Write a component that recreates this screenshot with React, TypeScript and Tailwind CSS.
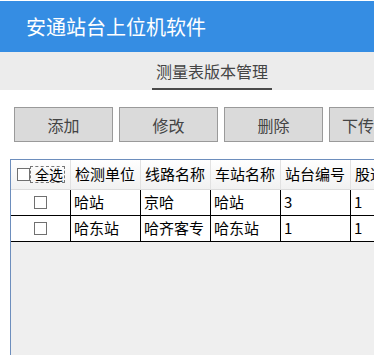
import React from "react";

const font = { fontFamily: '"Noto Sans CJK SC", "Microsoft YaHei", sans-serif' };

const cols = ["检测单位", "线路名称", "车站名称", "站台编号", "股道"];
const rows = [
  ["哈站", "京哈", "哈站", "3", "1"],
  ["哈东站", "哈齐客专", "哈东站", "1", "1"],
];

function Box() {
  return <div className="w-[13px] h-[13px] shrink-0 border border-[#707070] bg-white" />;
}

export default function App() {
  return (
    <div className="w-[374px] h-[355px] overflow-hidden bg-white flex flex-col" style={font}>
      <div className="h-[1px] bg-white shrink-0" />
      <div className="h-[51px] shrink-0 bg-[#358de3] flex items-center pl-[26px] text-white text-[20px] leading-none">
        安通站台上位机软件
      </div>
      <div className="h-[38px] shrink-0 bg-[#ececec] flex pl-[152px]">
        <div className="w-[120px] flex flex-col items-center">
          <div className="flex-1 flex items-center text-[16px] leading-none text-[#444] pt-[1px]">测量表版本管理</div>
          <div className="h-[2px] w-full bg-[#4a4a4a]" />
        </div>
      </div>
      <div className="h-[17px] shrink-0" />
      <div className="flex gap-[6px] pl-[14px] shrink-0">
        {["添加", "修改", "删除"].map((t) => (
          <div
            key={t}
            className="w-[99px] h-[35px] shrink-0 bg-[#dadada] border border-[#9a9a9a] flex items-center justify-center text-[16px] text-[#444]"
          >
            {t}
          </div>
        ))}
        <div className="w-[99px] h-[35px] shrink-0 bg-[#dadada] border border-[#9a9a9a] flex items-center pl-[12px] text-[16px] text-[#444]">
          下传
        </div>
      </div>
      <div className="h-[17px] shrink-0" />
      <div className="flex-1 ml-[10px] border-l border-t border-[#6d8ebd] bg-[#efefef] overflow-hidden">
        <div className="w-[500px]">
          <div className="h-[30px] flex bg-gradient-to-b from-[#ffffff] to-[#f1f1f1] border-b border-[#dcdcdc] text-[15px] text-black">
            <div className="w-[60px] shrink-0 flex items-center pl-[6px] border-r border-[#e2e2e2]">
              <Box />
              <span className="shrink-0 border border-dashed border-[#777] pl-[4px] pr-[1px] text-[14px] leading-[15px] h-[17px] whitespace-nowrap">全选</span>
            </div>
            {cols.map((c) => (
              <div key={c} className="w-[70px] shrink-0 flex items-center pl-[4px] border-r border-[#e2e2e2] whitespace-nowrap">
                {c}
              </div>
            ))}
          </div>
          {rows.map((r, i) => (
            <div key={i} className="h-[26px] flex bg-white border-b border-black text-[15px] text-black">
              <div className="w-[60px] shrink-0 flex items-center justify-center border-r border-black">
                <Box />
              </div>
              {r.map((v, j) => (
                <div key={j} className="w-[70px] shrink-0 flex items-center pl-[3px] border-r border-black whitespace-nowrap">
                  {v}
                </div>
              ))}
            </div>
          ))}
        </div>
      </div>
    </div>
  );
}
